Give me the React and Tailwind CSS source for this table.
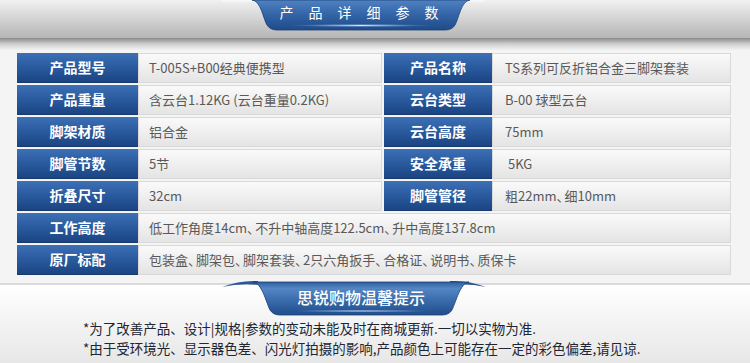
import React from "react";

const FONT = "font-['Noto_Sans_CJK_SC','Noto_Sans',sans-serif]";

function narrow(text) {
  const parts = text.split("、");
  const out = [];
  parts.forEach((p, i) => {
    out.push(<React.Fragment key={"p" + i}>{p}</React.Fragment>);
    if (i < parts.length - 1)
      out.push(
        <span key={"s" + i} className="tracking-[-5px]">
          、
        </span>
      );
  });
  return out;
}

function Label({ children, w }) {
  return (
    <div
      className={`${w} h-full shrink-0 flex items-center justify-center bg-gradient-to-b from-[#3d70b5] via-[#2a5a9e] to-[#1b4482] border-b border-[#163a70] text-white text-[14px] font-bold`}
    >
      {children}
    </div>
  );
}

function Value({ children, w, pl = "pl-[10px]" }) {
  return (
    <div
      className={`${w} h-full flex items-center ${pl} bg-gradient-to-b from-[#fafafa] to-[#e4e4e4] border border-[#d9d9d9] text-[#595959] text-[13px] whitespace-nowrap`}
    >
      {narrow(children)}
    </div>
  );
}

function Row2({ a, b, c, d, dpl = "pl-[12px]" }) {
  return (
    <div className="h-[30px] flex">
      <Label w="w-[121px]">{a}</Label>
      <Value w="w-[244px]">{b}</Value>
      <div className="w-[2px] shrink-0" />
      <Label w="w-[108px]">{c}</Label>
      <Value w="w-[239px]" pl={dpl}>{d}</Value>
    </div>
  );
}

function Row1({ a, b }) {
  return (
    <div className="h-[30px] flex">
      <Label w="w-[121px]">{a}</Label>
      <Value w="w-[593px]">{b}</Value>
    </div>
  );
}

function TopBadge() {
  return (
    <div className="absolute left-[222px] top-0 w-[262px] h-[34px]">
      <svg width="262" height="34" viewBox="0 0 262 34" className="absolute inset-0">
        <defs>
          <linearGradient id="tb" x1="0" y1="0" x2="0" y2="1">
            <stop offset="0" stopColor="#4f82c2" />
            <stop offset="0.45" stopColor="#3466a8" />
            <stop offset="1" stopColor="#1f4c8a" />
          </linearGradient>
          <radialGradient id="tg" cx="0.5" cy="0.5" r="0.5">
            <stop offset="0" stopColor="#dbe9ff" stopOpacity="1" />
            <stop offset="1" stopColor="#7fa6dc" stopOpacity="0" />
          </radialGradient>
        </defs>
        <rect x="0" y="0" width="262" height="2" fill="#f4f6f8" />
        <path
          d="M30,0 C39,1 41,18 45,25 Q48,30 55,30 L223,30 Q230,30 233,25 C237,18 239,1 248,0 Z"
          fill="url(#tb)"
          stroke="#1a3f75"
          strokeWidth="0.8"
        />
        <ellipse cx="139" cy="25.5" rx="72" ry="1.6" fill="url(#tg)" />
      </svg>
      <div className="absolute left-0 right-0 top-[2px] flex justify-center">
        <span className="text-white text-[14px] tracking-[15px] pl-[27px] leading-[20px]">产品详细参数</span>
      </div>
    </div>
  );
}

function BottomBadge() {
  return (
    <div className="absolute left-[222px] top-[-5px] w-[264px] h-[40px]">
      <svg width="264" height="40" viewBox="0 0 264 40" className="absolute inset-0">
        <defs>
          <linearGradient id="bb" x1="0" y1="0" x2="0" y2="1">
            <stop offset="0" stopColor="#2f5f9f" />
            <stop offset="0.2" stopColor="#5486c4" />
            <stop offset="0.55" stopColor="#3a6cad" />
            <stop offset="1" stopColor="#204d8b" />
          </linearGradient>
          <radialGradient id="bg" cx="0.5" cy="0.5" r="0.5">
            <stop offset="0" stopColor="#cfe0fa" stopOpacity="0.9" />
            <stop offset="1" stopColor="#7fa6dc" stopOpacity="0" />
          </radialGradient>
        </defs>
        <path d="M0,7 Q18,0 36,1 L37,5 Q18,3 0,7 Z" fill="#2a5797" />
        <path d="M264,7 Q246,0 228,1 L227,5 Q246,3 264,7 Z" fill="#2a5797" />
        <path
          d="M31,2 C40,3 44,22 48,30 Q51,35 58,35 L220,35 Q227,35 230,30 C234,22 238,3 247,2 Z"
          fill="url(#bb)"
          stroke="#1a3f75"
          strokeWidth="0.8"
        />
        <ellipse cx="139" cy="31" rx="70" ry="1.5" fill="url(#bg)" />
      </svg>
      <div className="absolute left-0 right-0 top-[7px] flex justify-center">
        <span className="text-white text-[16px] font-medium leading-[20px] pl-[14px]">思锐购物温馨提示</span>
      </div>
    </div>
  );
}

export default function App() {
  return (
    <div className={`w-[750px] h-[363px] relative overflow-hidden bg-[#f4f4f4] ${FONT}`}>
      <div className="h-[38px] relative bg-gradient-to-b from-[#f1f1f1] to-[#b5b5b5]">
        <TopBadge />
      </div>
      <div className="h-[12px] bg-gradient-to-b from-[#8a8a8a] via-[#cfcfcf] to-[#f2f2f2]" />
      <div className="flex flex-col gap-[2px] pl-[17px] pt-[3px]">
        <Row2 a="产品型号" b="T-005S+B00经典便携型" c="产品名称" d="TS系列可反折铝合金三脚架套装" />
        <Row2 a="产品重量" b="含云台1.12KG (云台重量0.2KG)" c="云台类型" d="B-00 球型云台" />
        <Row2 a="脚架材质" b="铝合金" c="云台高度" d="75mm" />
        <Row2 a="脚管节数" b="5节" c="安全承重" d="5KG" dpl="pl-[15px]" />
        <Row2 a="折叠尺寸" b="32cm" c="脚管管径" d="粗22mm、细10mm" />
        <Row1 a="工作高度" b="低工作角度14cm、不升中轴高度122.5cm、升中高度137.8cm" />
        <Row1 a="原厂标配" b="包装盒、脚架包、脚架套装、2只六角扳手、合格证、说明书 、质保卡" />
      </div>
      <div className="absolute left-0 right-0 top-[283px] bottom-0 border-t-2 border-[#dadada] bg-gradient-to-b from-white to-[#e7e7e7]">
        <BottomBadge />
        <div className="pl-[83px] pt-[34px] flex flex-col gap-[2px] text-[#1d2633] text-[13.5px] leading-[18px] whitespace-nowrap">
          <div>*为了改善产品、设计|规格|参数的变动未能及时在商城更新.一切以实物为准.</div>
          <div>*由于受环境光、显示器色差、闪光灯拍摄的影响,产品颜色上可能存在一定的彩色偏差,请见谅.</div>
        </div>
      </div>
    </div>
  );
}
